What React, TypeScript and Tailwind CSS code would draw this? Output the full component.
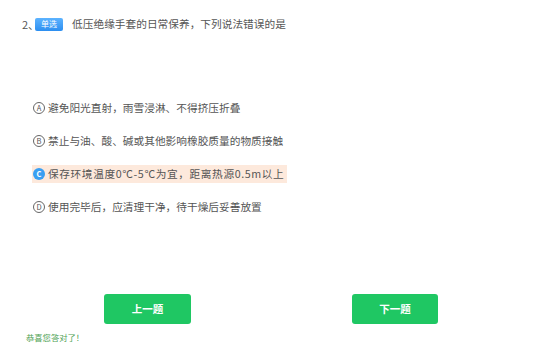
const options = [
  { key: 'A', text: '避免阳光直射，雨雪浸淋、不得挤压折叠' },
  { key: 'B', text: '禁止与油、酸、碱或其他影响橡胶质量的物质接触' },
  { key: 'C', text: '保存环境温度0℃-5℃为宜，距离热源0.5m以上', picked: true },
  { key: 'D', text: '使用完毕后，应清理干净，待干燥后妥善放置' },
]

const font = { fontFamily: '"Noto Sans CJK SC", "Noto Sans", sans-serif' }

export default function App() {
  return (
    <div
      className="h-[364px] w-[557px] overflow-hidden bg-white text-[#555]"
      style={font}
    >
      <div className="flex items-center pl-[22px] pt-[16px] text-[10.7px] leading-[16px]">
        <span className="whitespace-nowrap text-[11px]">2、</span>
        <span className="ml-[-4px] flex h-[13px] w-[28px] items-center justify-center rounded-[2px] bg-gradient-to-b from-[#5cb3ff] to-[#2b8ef0] text-[8px] leading-none text-white">
          单选
        </span>
        <span className="ml-[9px]">低压绝缘手套的日常保养，下列说法错误的是</span>
      </div>

      <div className="ml-[32px] mt-[67px] flex flex-col gap-[15px]">
        {options.map((o) => (
          <div
            key={o.key}
            className={
              o.picked
                ? 'flex h-[18px] w-fit items-center bg-[#fde9dc] pl-[1px] pr-[3px]'
                : 'flex h-[18px] w-fit items-center pl-[1px] pr-[3px]'
            }
          >
            {o.picked ? (
              <span className="flex h-[12px] w-[12px] items-center justify-center rounded-full bg-[#3a9ff2] text-[7.5px] font-bold leading-none text-white">
                {o.key}
              </span>
            ) : (
              <span className="flex h-[12px] w-[12px] items-center justify-center rounded-full border border-[#666] text-[7.5px] leading-none text-[#555]">
                {o.key}
              </span>
            )}
            <span
              className={
                o.picked
                  ? 'ml-[3px] text-[10.7px] leading-[16px] tracking-[0.6px]'
                  : 'ml-[3px] text-[10.7px] leading-[16px]'
              }
            >
              {o.text}
            </span>
          </div>
        ))}
      </div>

      <div className="ml-[104px] mt-[78px] flex gap-[161px]">
        <button className="flex h-[30px] w-[87px] items-center justify-center rounded-[3px] bg-[#1fc763] text-[10.5px] font-bold text-white">
          上一题
        </button>
        <button className="flex h-[30px] w-[86px] items-center justify-center rounded-[3px] bg-[#1fc763] text-[10.5px] font-bold text-white">
          下一题
        </button>
      </div>

      <div className="ml-[26px] mt-[7px] text-[8.3px] leading-[12px] text-[#4fa356]">
        恭喜您答对了！
      </div>
    </div>
  )
}
